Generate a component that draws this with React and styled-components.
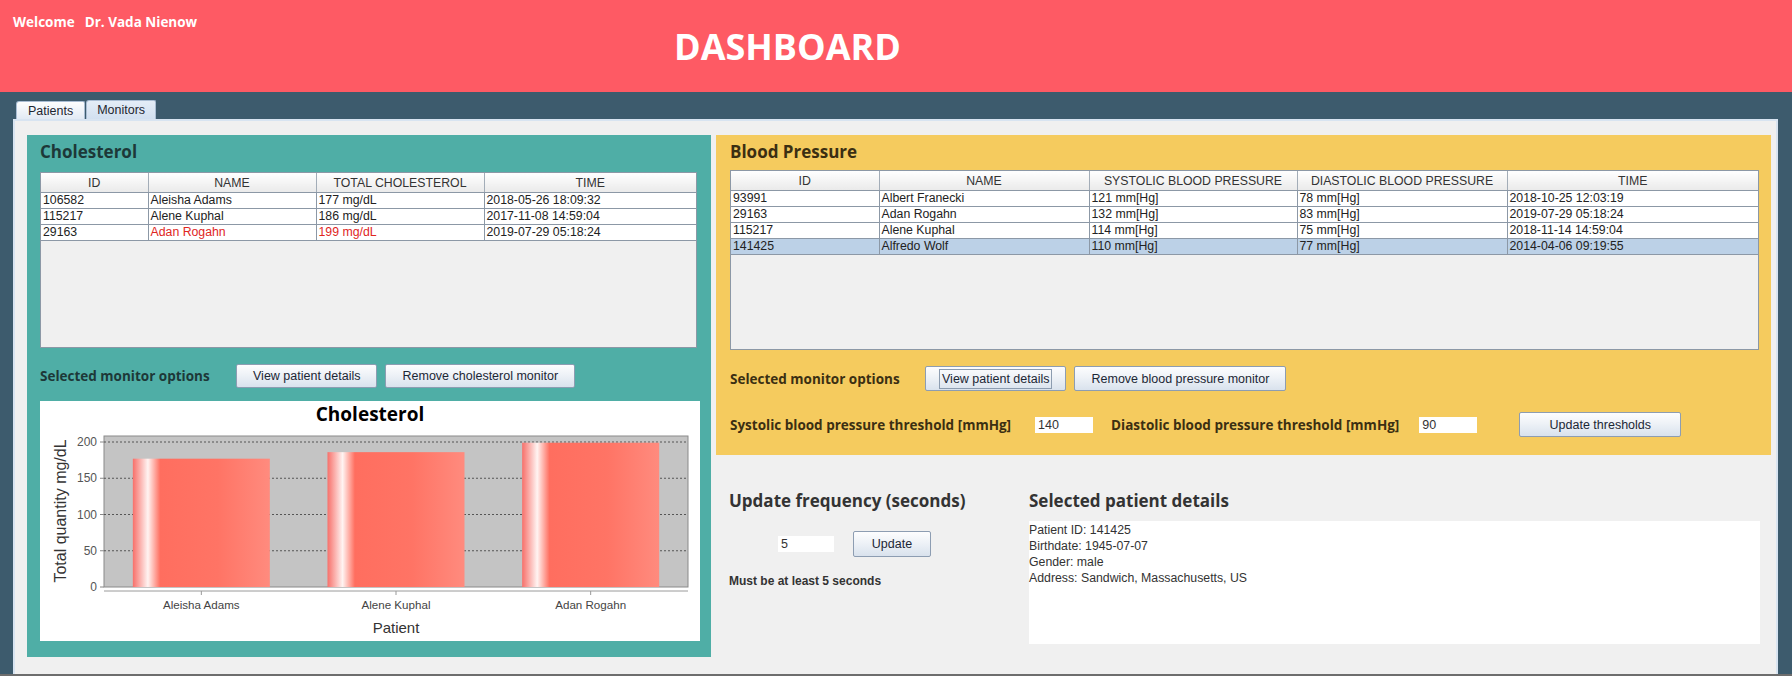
import React from "react";
import styled, { createGlobalStyle } from "styled-components";

const GlobalStyle = createGlobalStyle`
  body {
    margin: 0;
    background: #3d5b6d;
    overflow: hidden;
  }
`;

const Frame = styled.div`
  width: 1792px;
  height: 676px;
  display: flex;
  flex-direction: column;
  background: #3d5b6d;
  font-family: "Liberation Sans", Arial, sans-serif;
  overflow: hidden;
`;

const Header = styled.div`
  height: 92px;
  flex-shrink: 0;
  box-sizing: border-box;
  padding-top: 13px;
  background: #fe5a64;
  color: #fff;
  display: flex;
  flex-direction: column;
`;

const Welcome = styled.div`
  margin-left: 13px;
  display: flex;
  gap: 10px;
  font-family: "Open Sans", sans-serif;
  font-weight: 700;
  font-size: 13.5px;
  line-height: 18px;
`;

const PageTitle = styled.h1`
  margin: 0 0 0 674px;
  font-family: "Open Sans", sans-serif;
  font-weight: 700;
  font-size: 36px;
  line-height: 32px;
`;

const TabStrip = styled.div`
  height: 27px;
  flex-shrink: 0;
  display: flex;
  align-items: flex-end;
  padding-left: 16px;
`;

const Tab = styled.div`
  height: ${(p) => (p.$active ? 19 : 18)}px;
  box-sizing: border-box;
  padding: 0 ${(p) => (p.$active ? 10 : 11)}px;
  border: 1px solid #a9bdd3;
  border-bottom: none;
  border-radius: 3px 2px 0 0;
  background: ${(p) =>
    p.$active
      ? "linear-gradient(#e4edf7, #d2e0f0)"
      : "linear-gradient(#fdfefe, #e2eaf4)"};
  font-size: 12.5px;
  line-height: 18px;
  color: #1e2630;
  margin-right: 1px;
`;

const TabBody = styled.div`
  flex: 1;
  margin: 0 14px 0 13px;
  box-sizing: border-box;
  background: #f0f0f0;
  border: 2px solid #d8e4f1;
  border-bottom: none;
  padding: 14px 0 0 12px;
  display: grid;
  grid-template-columns: 684px 1055px;
  column-gap: 5px;
  align-items: start;
`;

const BottomLine = styled.div`
  height: 2px;
  flex-shrink: 0;
  background: #6d6d6d;
`;

const Card = styled.section`
  height: ${(p) => p.$h}px;
  box-sizing: border-box;
  padding: 6px ${(p) => p.$pr}px 0 ${(p) => p.$pl}px;
  background: ${(p) => p.$bg};
  color: ${(p) => p.$ink};
  display: flex;
  flex-direction: column;
`;

const CardTitle = styled.h2`
  margin: 0;
  font-family: "Open Sans", sans-serif;
  font-weight: 700;
  font-size: 17px;
  line-height: 22px;
`;

const TableFrame = styled.div`
  margin-top: ${(p) => p.$mt}px;
  height: ${(p) => p.$h}px;
  flex-shrink: 0;
  box-sizing: border-box;
  background: #f0f0f0;
  border: 1px solid #8c98a6;
  overflow: hidden;
`;

const Table = styled.table`
  width: 100%;
  border-collapse: collapse;
  table-layout: fixed;
  font-size: 12.3px;
  color: #222;
`;

const Col = styled.col`
  width: ${(p) => p.$w}px;
`;

const Th = styled.th`
  height: 19px;
  padding: 0;
  font-weight: normal;
  text-align: center;
  color: #333;
  background: linear-gradient(#ffffff, #eaeaea);
  border-right: 1px solid #a3adb8;
  border-bottom: 1px solid #8c98a6;
  &:last-child {
    border-right: none;
  }
`;

const Td = styled.td`
  height: 15px;
  padding: 0 2px;
  line-height: 15px;
  white-space: nowrap;
  overflow: hidden;
  background: ${(p) => (p.$sel ? "#bcd1e7" : "#fff")};
  color: ${(p) => (p.$alert ? "#e0261d" : "#222")};
  border-right: 1px solid #8c98a6;
  border-bottom: 1px solid #8c98a6;
  &:last-child {
    border-right: none;
  }
`;

const OptionsRow = styled.div`
  margin-top: ${(p) => p.$mt}px;
  display: flex;
  align-items: center;
  gap: 8px;
`;

const BoldLabel = styled.span`
  font-family: "Open Sans", sans-serif;
  font-weight: 700;
  font-size: 13.5px;
  white-space: nowrap;
  width: ${(p) => (p.$w ? `${p.$w}px` : "auto")};
  flex-shrink: 0;
`;

const Button = styled.button`
  height: ${(p) => p.$h || 24}px;
  width: ${(p) => (p.$w ? `${p.$w}px` : "auto")};
  padding: 0 16px;
  margin-left: ${(p) => p.$ml || 0}px;
  flex-shrink: 0;
  border: 1px solid #8d9db2;
  border-radius: 2px;
  background: linear-gradient(#fdfdfe 0%, #eef2f7 45%, #d9e2ed 100%);
  font-family: "Liberation Sans", Arial, sans-serif;
  font-size: 12.5px;
  color: #1c2735;
  cursor: pointer;
`;

const FocusText = styled.span`
  outline: 1px solid #8c9cb0;
  outline-offset: 2px;
`;

const ChartBox = styled.div`
  margin-top: 13px;
  width: 660px;
  height: 240px;
  background: #fff;
  display: flex;
  flex-direction: column;
`;

const ChartTitle = styled.div`
  height: 26px;
  text-align: center;
  font-family: "Open Sans", sans-serif;
  font-weight: 700;
  font-size: 19px;
  line-height: 26px;
  color: #000;
`;

const RightCol = styled.div`
  display: flex;
  flex-direction: column;
`;

const ThresholdRow = styled.div`
  margin-top: 21px;
  display: flex;
  align-items: center;
`;

const Field = styled.input`
  width: ${(p) => p.$w}px;
  height: 16px;
  box-sizing: border-box;
  margin: 0 ${(p) => p.$mr || 0}px 0 ${(p) => p.$ml || 0}px;
  padding: 0 3px;
  border: none;
  outline: none;
  background: #fff;
  font-family: "Liberation Sans", Arial, sans-serif;
  font-size: 12.5px;
  color: #333;
`;

const BottomRow = styled.div`
  padding: 35px 0 0 13px;
  display: grid;
  grid-template-columns: 300px 731px;
`;

const SubTitle = styled.h3`
  margin: 0;
  font-family: "Open Sans", sans-serif;
  font-weight: 700;
  font-size: 17px;
  line-height: 22px;
  color: #333;
`;

const FreqRow = styled.div`
  margin-top: 19px;
  display: flex;
  align-items: center;
`;

const Note = styled.div`
  margin-top: 16px;
  font-weight: 700;
  font-size: 12px;
  line-height: 16px;
  color: #333;
`;

const DetailBox = styled.div`
  margin-top: 9px;
  height: 123px;
  background: #fff;
  padding-top: 1px;
  box-sizing: border-box;
  font-size: 12.3px;
  line-height: 16px;
  color: #333;
`;

const cholesterolRows = [
  { id: "106582", name: "Aleisha Adams", total: "177 mg/dL", time: "2018-05-26 18:09:32" },
  { id: "115217", name: "Alene Kuphal", total: "186 mg/dL", time: "2017-11-08 14:59:04" },
  { id: "29163", name: "Adan Rogahn", total: "199 mg/dL", time: "2019-07-29 05:18:24", alert: true },
];

const pressureRows = [
  { id: "93991", name: "Albert Franecki", sys: "121 mm[Hg]", dia: "78 mm[Hg]", time: "2018-10-25 12:03:19" },
  { id: "29163", name: "Adan Rogahn", sys: "132 mm[Hg]", dia: "83 mm[Hg]", time: "2019-07-29 05:18:24" },
  { id: "115217", name: "Alene Kuphal", sys: "114 mm[Hg]", dia: "75 mm[Hg]", time: "2018-11-14 14:59:04" },
  { id: "141425", name: "Alfredo Wolf", sys: "110 mm[Hg]", dia: "77 mm[Hg]", time: "2014-04-06 09:19:55", sel: true },
];

const chartData = [
  { name: "Aleisha Adams", value: 177 },
  { name: "Alene Kuphal", value: 186 },
  { name: "Adan Rogahn", value: 199 },
];

const CholesterolChart = () => {
  const px = 64;
  const pw = 584;
  const top = 9;
  const base = 160;
  const y = (v) => base - v * 0.725;
  const slot = pw / chartData.length;
  const barW = 137;

  return (
    <ChartBox>
      <ChartTitle>Cholesterol</ChartTitle>
      <svg width="660" height="214" viewBox="0 0 660 214">
        <defs>
          <linearGradient id="barFill" x1="0" x2="1" y1="0" y2="0">
            <stop offset="0%" stopColor="#f7706a" />
            <stop offset="11%" stopColor="#fff4f2" />
            <stop offset="20%" stopColor="#ff6e5f" />
            <stop offset="62%" stopColor="#ff7465" />
            <stop offset="100%" stopColor="#ff8b7e" />
          </linearGradient>
        </defs>
        <rect x={px} y={top} width={pw} height={base - top} fill="#c4c4c4" stroke="#8a8a8a" />
        {[50, 100, 150, 200].map((v) => (
          <line key={v} x1={px} x2={px + pw} y1={y(v)} y2={y(v)} stroke="#555" strokeDasharray="2 2" />
        ))}
        {[0, 50, 100, 150, 200].map((v) => (
          <g key={v}>
            <line x1={px - 4} x2={px} y1={y(v)} y2={y(v)} stroke="#888" />
            <text x={px - 7} y={y(v) + 4} textAnchor="end" fontSize="12" fill="#555" fontFamily="Liberation Sans, Arial, sans-serif">
              {v}
            </text>
          </g>
        ))}
        {chartData.map((d, i) => {
          const cx = px + slot * i + slot / 2;
          return (
            <g key={d.name}>
              <rect x={cx - barW / 2} y={y(d.value)} width={barW} height={base - y(d.value)} fill="url(#barFill)" />
              <line x1={cx} x2={cx} y1={164} y2={168} stroke="#999" />
              <text x={cx} y={182} textAnchor="middle" fontSize="11.6" fill="#444" fontFamily="Liberation Sans, Arial, sans-serif">
                {d.name}
              </text>
            </g>
          );
        })}
        <line x1={px} x2={px + pw} y1={164} y2={164} stroke="#9a9a9a" />
        <text x={px + pw / 2} y={206} textAnchor="middle" fontSize="15" fill="#333" fontFamily="Liberation Sans, Arial, sans-serif">
          Patient
        </text>
        <text
          transform="translate(20 84) rotate(-90)"
          textAnchor="middle"
          dominantBaseline="central"
          fontSize="16"
          fill="#333"
          fontFamily="Liberation Sans, Arial, sans-serif"
        >
          Total quantity mg/dL
        </text>
      </svg>
    </ChartBox>
  );
};

const App = () => {
  return (
    <>
      <GlobalStyle />
      <Frame>
        <Header>
          <Welcome>
            <span>Welcome</span>
            <span>Dr. Vada Nienow</span>
          </Welcome>
          <PageTitle>DASHBOARD</PageTitle>
        </Header>
        <TabStrip>
          <Tab>Patients</Tab>
          <Tab $active>Monitors</Tab>
        </TabStrip>
        <TabBody>
          <Card $h={522} $pl={13} $pr={14} $bg="#4faea6" $ink="#1d3838">
            <CardTitle>Cholesterol</CardTitle>
            <TableFrame $mt={9} $h={176}>
              <Table>
                <colgroup>
                  <Col $w={107} />
                  <Col $w={168} />
                  <Col $w={168} />
                  <Col $w={212} />
                </colgroup>
                <thead>
                  <tr>
                    <Th>ID</Th>
                    <Th>NAME</Th>
                    <Th>TOTAL CHOLESTEROL</Th>
                    <Th>TIME</Th>
                  </tr>
                </thead>
                <tbody>
                  {cholesterolRows.map((r) => (
                    <tr key={r.id}>
                      <Td>{r.id}</Td>
                      <Td $alert={r.alert}>{r.name}</Td>
                      <Td $alert={r.alert}>{r.total}</Td>
                      <Td>{r.time}</Td>
                    </tr>
                  ))}
                </tbody>
              </Table>
            </TableFrame>
            <OptionsRow $mt={16}>
              <BoldLabel $w={188}>Selected monitor options</BoldLabel>
              <Button>View patient details</Button>
              <Button>Remove cholesterol monitor</Button>
            </OptionsRow>
            <CholesterolChart />
          </Card>

          <RightCol>
            <Card $h={320} $pl={14} $pr={12} $bg="#f5cb5e" $ink="#3b2f12">
              <CardTitle>Blood Pressure</CardTitle>
              <TableFrame $mt={7} $h={180}>
                <Table>
                  <colgroup>
                    <Col $w={148} />
                    <Col $w={210} />
                    <Col $w={208} />
                    <Col $w={210} />
                    <Col $w={251} />
                  </colgroup>
                  <thead>
                    <tr>
                      <Th>ID</Th>
                      <Th>NAME</Th>
                      <Th>SYSTOLIC BLOOD PRESSURE</Th>
                      <Th>DIASTOLIC BLOOD PRESSURE</Th>
                      <Th>TIME</Th>
                    </tr>
                  </thead>
                  <tbody>
                    {pressureRows.map((r) => (
                      <tr key={r.id}>
                        <Td $sel={r.sel}>{r.id}</Td>
                        <Td $sel={r.sel}>{r.name}</Td>
                        <Td $sel={r.sel}>{r.sys}</Td>
                        <Td $sel={r.sel}>{r.dia}</Td>
                        <Td $sel={r.sel}>{r.time}</Td>
                      </tr>
                    ))}
                  </tbody>
                </Table>
              </TableFrame>
              <OptionsRow $mt={16}>
                <BoldLabel $w={187}>Selected monitor options</BoldLabel>
                <Button $h={25}>
                  <FocusText>View patient details</FocusText>
                </Button>
                <Button $h={25}>Remove blood pressure monitor</Button>
              </OptionsRow>
              <ThresholdRow>
                <BoldLabel>Systolic blood pressure threshold [mmHg]</BoldLabel>
                <Field $w={58} $ml={24} $mr={18} defaultValue="140" />
                <BoldLabel>Diastolic blood pressure threshold [mmHg]</BoldLabel>
                <Field $w={58} $ml={20} defaultValue="90" />
                <Button $h={25} $w={162} $ml={42}>
                  Update thresholds
                </Button>
              </ThresholdRow>
            </Card>

            <BottomRow>
              <div>
                <SubTitle>Update frequency (seconds)</SubTitle>
                <FreqRow>
                  <Field $w={56} $ml={49} $mr={19} defaultValue="5" />
                  <Button $h={26} $w={78}>
                    Update
                  </Button>
                </FreqRow>
                <Note>Must be at least 5 seconds</Note>
              </div>
              <div>
                <SubTitle>Selected patient details</SubTitle>
                <DetailBox>
                  <div>Patient ID: 141425</div>
                  <div>Birthdate: 1945-07-07</div>
                  <div>Gender: male</div>
                  <div>Address: Sandwich, Massachusetts, US</div>
                </DetailBox>
              </div>
            </BottomRow>
          </RightCol>
        </TabBody>
        <BottomLine />
      </Frame>
    </>
  );
};

export default App;
